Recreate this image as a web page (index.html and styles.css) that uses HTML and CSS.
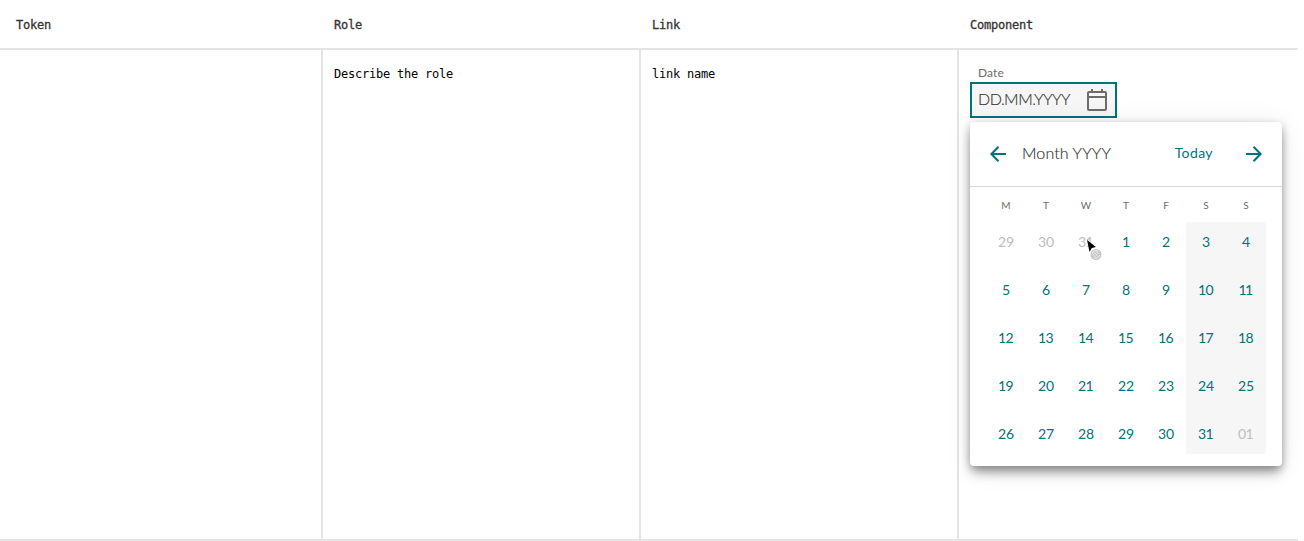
FILE: index.html
```html
<!DOCTYPE html>
<html lang="en">
<head>
<meta charset="utf-8">
<title>Date component</title>
<link rel="stylesheet" href="styles.css">
</head>
<body>
<main class="table">
  <header class="row head">
    <div class="cell">Token</div><div class="cell">Role</div><div class="cell">Link</div><div class="cell">Component</div>
  </header>
  <section class="row body">
    <div class="cell"></div>
    <div class="cell">Describe the role</div>
    <div class="cell">link name</div>
    <div class="cell component">
      <label class="label">Date</label>
      <div class="field">
        <span class="field-text">DD.MM.YYYY</span>
        <svg class="field-icon" width="22" height="24" viewBox="0 0 22 24" fill="none" stroke="#6b6b6b" stroke-width="2"><rect x="2" y="4" width="18" height="18" rx="1"/><path d="M2 9H20M6 1V4M16 1V4"/></svg>
      </div>
      <div class="calendar">
        <div class="bar">
          <svg width="16" height="16" viewBox="0 0 16 16" fill="none" stroke="#00727a" stroke-width="2"><path d="M16 8H1.5M8.5 .8L1.4 8L8.5 15.2"/></svg>
          <span class="month">Month YYYY</span>
          <span class="today">Today</span>
          <svg width="16" height="16" viewBox="0 0 16 16" fill="none" stroke="#00727a" stroke-width="2"><path d="M0 8H14.5M7.5 .8L14.6 8L7.5 15.2"/></svg>
        </div>
        <div class="grid names"><span>M</span><span>T</span><span>W</span><span>T</span><span>F</span><span>S</span><span>S</span></div>
        <div class="grid days">
          <span class="out">29</span><span class="out">30</span><span class="out one hovered">31<svg class="pointer" width="20" height="24" viewBox="0 0 20 24"><path d="M1 1L10 8L5.8 9L3.5 13Z" fill="#000"/><circle cx="10" cy="15.5" r="5.5" fill="#c5c5c5"/><path d="M6.2 15.2A4 4 0 0 1 12.5 12.2M13.8 15.8A4 4 0 0 1 7.5 18.7M8 13.3L12.2 17.8M10 12.5L13.1 15M7 15.5L10 18.5" fill="none" stroke="#f1f1f1" stroke-width="1"/></svg></span><span>1</span><span>2</span><span>3</span><span>4</span>
          <span>5</span><span>6</span><span>7</span><span>8</span><span>9</span><span class="one">10</span><span class="ones">11</span>
          <span class="one">12</span><span class="one">13</span><span class="one">14</span><span class="one">15</span><span class="one">16</span><span class="one">17</span><span class="one">18</span>
          <span class="one">19</span><span>20</span><span class="one">21</span><span>22</span><span>23</span><span>24</span><span>25</span>
          <span>26</span><span>27</span><span>28</span><span>29</span><span>30</span><span class="one">31</span><span class="out one">01</span>
        </div>
      </div>
    </div>
  </section>
</main>
</body>
</html>
```
FILE: styles.css
```css
* { box-sizing: border-box; }
body { margin: 0; background: #fff; overflow: hidden; }
.table { width: 1298px; height: 541px; font: 12px/16px "DejaVu Sans Mono", monospace; letter-spacing: -.22px; color: #000; }
.row { display: grid; grid-template-columns: 321px 318px 318px 341px; border-bottom: 2px solid #e4e4e4; }
.head { height: 50px; color: #333; -webkit-text-stroke: .3px #333; }
.body { height: 491px; }
.cell { padding: 17px 11px 0; }
.body .cell { border-left: 2px solid #e4e4e4; }
.cell:first-child, .body .cell:first-child { padding-left: 16px; border-left: 0; }
.head .cell + .cell { padding-left: 13px; }
.body .cell { padding-top: 16px; }
.body .component { padding-top: 15px; letter-spacing: 0; font-family: Lato, sans-serif; }
.label { display: block; height: 17px; padding-left: 8px; color: #6b6b6b; font-size: 12px; letter-spacing: .1px; }
.field { display: flex; align-items: center; justify-content: space-between; width: 147px; height: 36px; padding: 0 7px 0 6px; border: 2px solid #00727a; background: #f6f6f6; }
.field-text { padding-bottom: 2px; color: #333; font-size: 16px; font-weight: 300; letter-spacing: -.5px; -webkit-text-stroke: .15px #333; }
.calendar { width: 312px; height: 344px; margin-top: 4px; border-radius: 4px; background: #fff; box-shadow: 0 8px 12px -2px rgba(0,0,0,.36), 0 2px 8px rgba(0,0,0,.2), 0 2px 28px rgba(0,0,0,.08); }
.bar { display: flex; align-items: center; height: 65px; padding: 0 20px; border-bottom: 1px solid #d8d8d8; font-size: 16px; }
.month { margin-left: 16px; padding-bottom: 2px; color: #333; font-weight: 300; letter-spacing: .1px; -webkit-text-stroke: .15px #333; }
.today { margin: 0 33px 0 auto; padding-bottom: 2px; color: #00727a; font-size: 14px; letter-spacing: .4px; }
.grid { display: grid; grid-template-columns: repeat(7, 40px); margin: 0 16px; }
.grid span { display: flex; align-items: center; justify-content: center; }
.names { height: 35px; padding-top: 1px; color: #6b6b6b; font-size: 10px; }
.days { height: 232px; grid-template-rows: repeat(5, 40px); row-gap: 8px; background: linear-gradient(#f6f6f6, #f6f6f6) right / 80px 100% no-repeat; border-radius: 4px; color: #00727a; font-size: 14px; }
.days .one { padding-right: 1px; letter-spacing: -.5px; }
.days .ones { padding-right: 2px; letter-spacing: -1.5px; }
.days .out { color: #bdbdbd; }
.days .hovered { position: relative; }
.pointer { position: absolute; left: 20px; top: 17px; }
```
